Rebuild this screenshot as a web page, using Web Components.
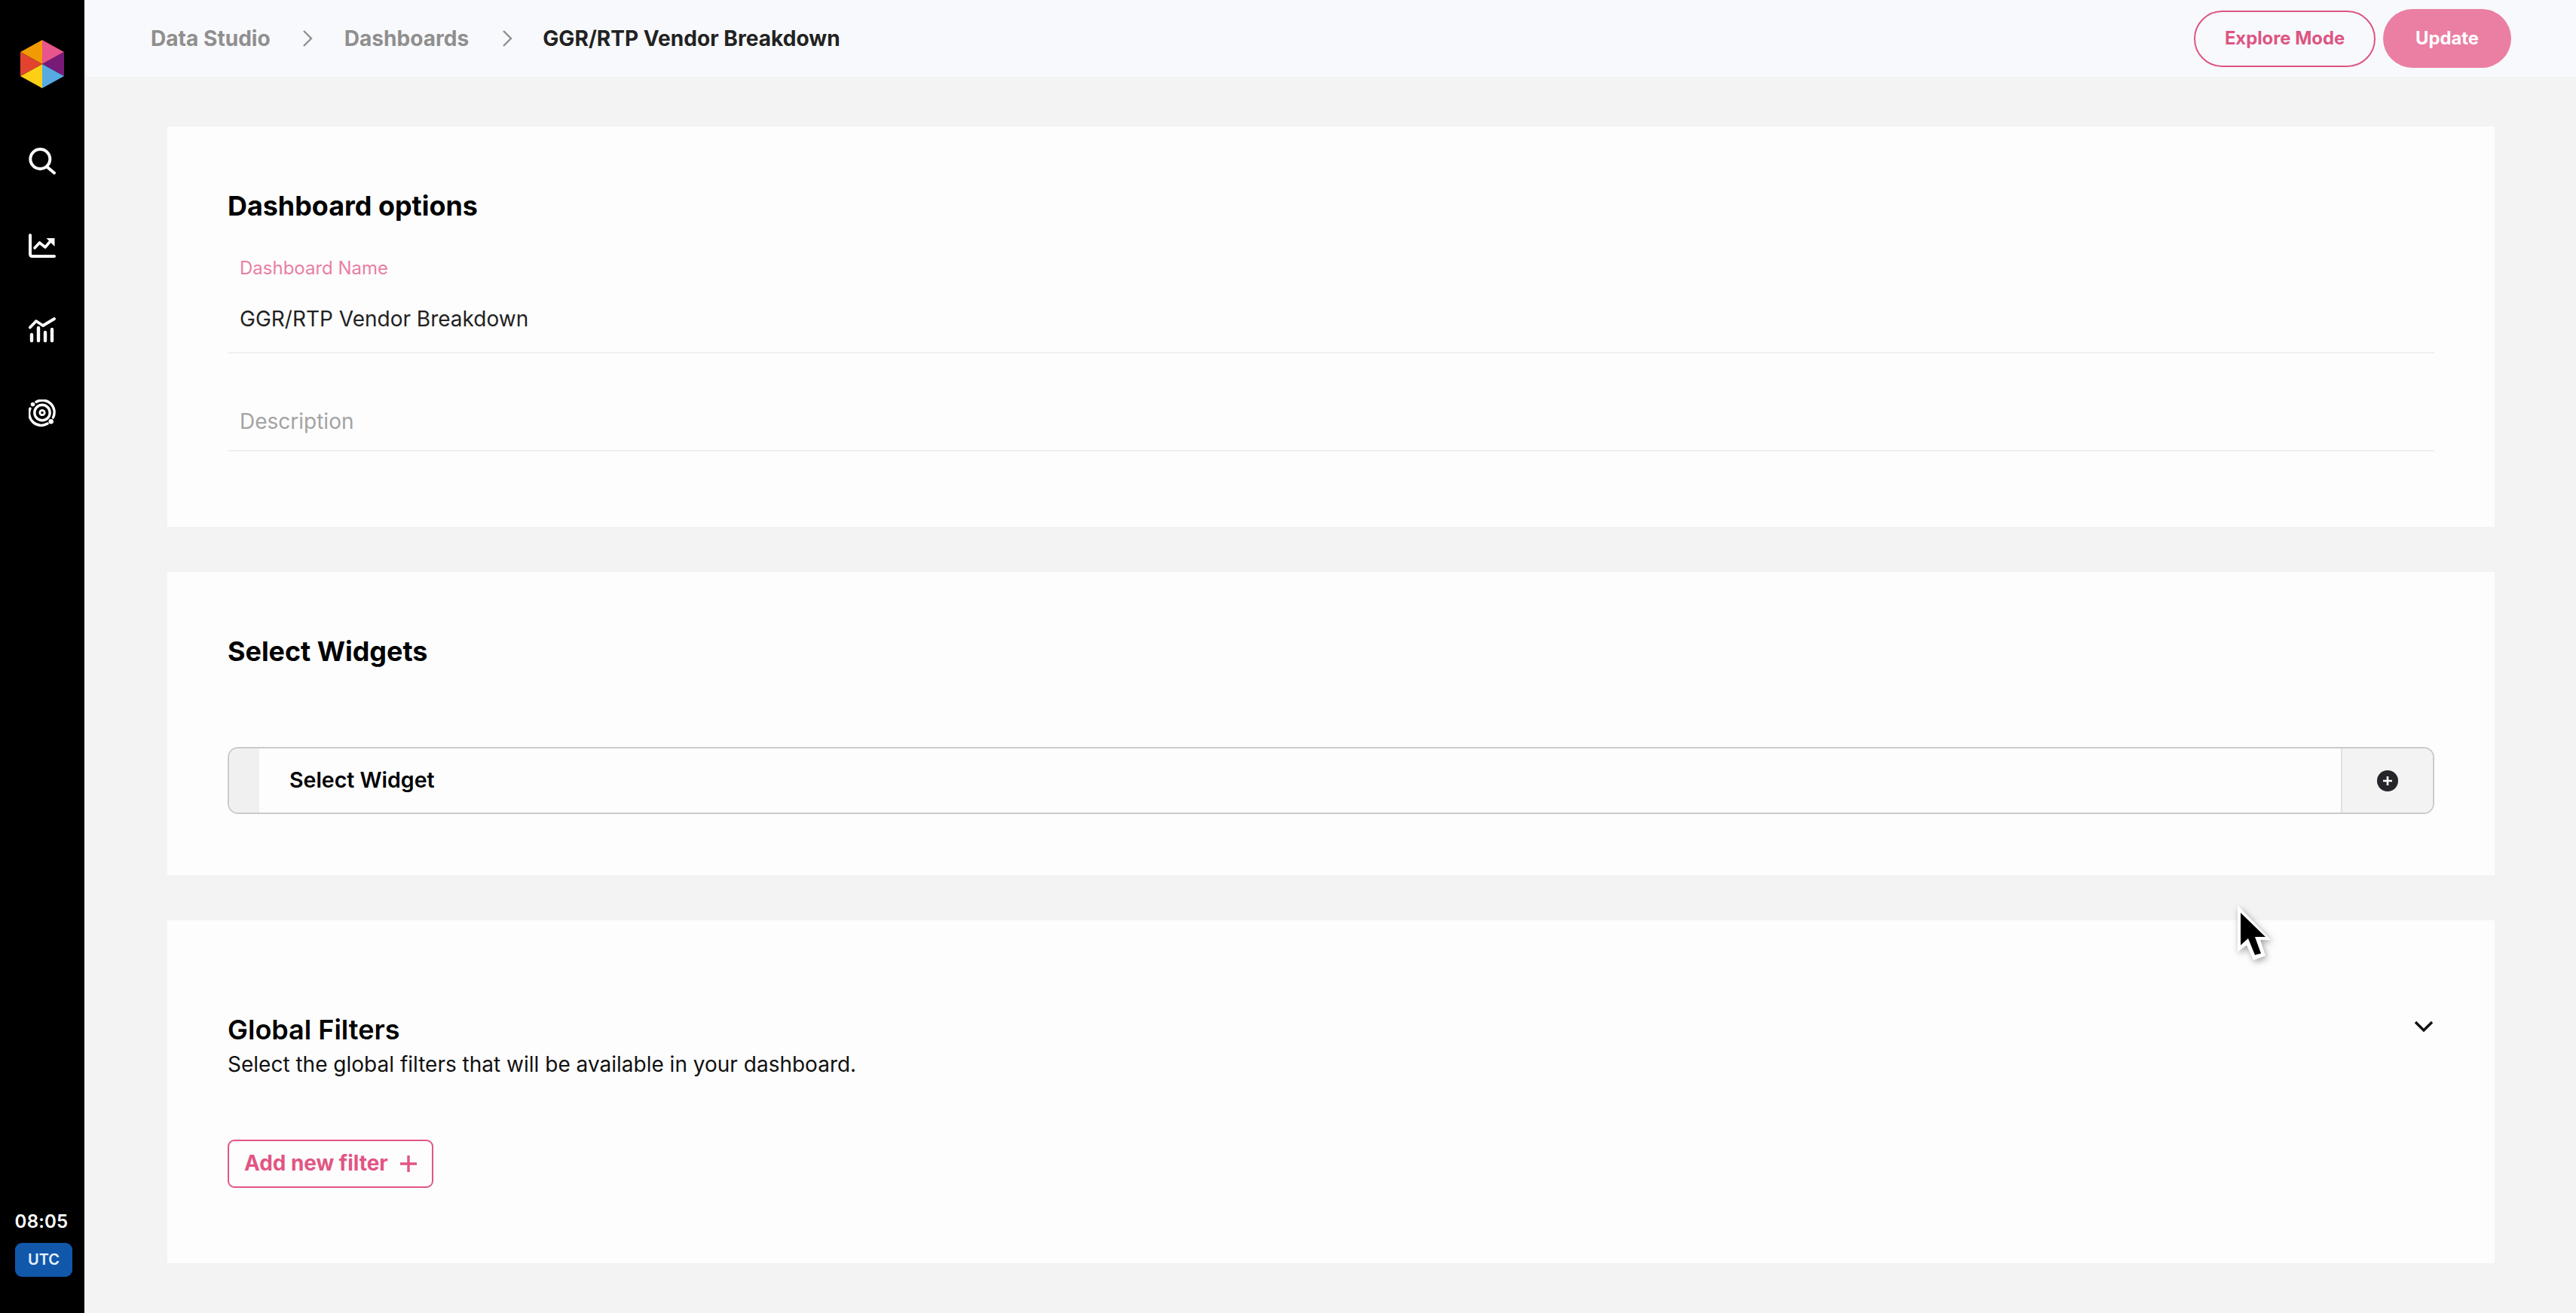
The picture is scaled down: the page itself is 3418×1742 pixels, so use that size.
<!DOCTYPE html>
<html><head><meta charset="utf-8"><style>
html,body{margin:0;height:100%}
body{font-family:Inter,"Liberation Sans",sans-serif;background:#f3f3f3;overflow:hidden}
</style></head><body>
<app-shell>
  <side-rail slot="rail"></side-rail>
  <top-bar slot="top"></top-bar>
  <option-card class="a" heading="Dashboard options">
    <text-field label="Dashboard Name" value="GGR/RTP Vendor Breakdown"></text-field>
    <text-field placeholder="Description"></text-field>
  </option-card>
  <option-card class="b" heading="Select Widgets"><widget-select></widget-select></option-card>
  <filter-card></filter-card>
</app-shell>
<mouse-cursor></mouse-cursor>
<script>
function def(name,html,init){customElements.define(name,class extends HTMLElement{constructor(){super();this.attachShadow({mode:'open'}).innerHTML=html;}connectedCallback(){if(init)init(this,this.shadowRoot)}})}
def('app-shell',`<style>
:host{display:grid;grid-template-columns:112px 1fr;grid-template-rows:102px 1fr;height:1742px;background:#f3f3f3}
::slotted(side-rail){grid-row:1/3}
main{display:flex;flex-direction:column;gap:60px;padding:66px 108px 0 110px}
</style><slot name="rail"></slot><slot name="top"></slot><main><slot></slot></main>`);
def('side-rail',`<style>
:host{display:flex;flex-direction:column;align-items:center;background:#000;height:1742px;position:relative}
.logo{margin-top:53px;display:block}
.nav{display:flex;flex-direction:column;align-items:center;gap:75.4px;margin-top:79px}
.nav svg{display:block;width:36px;height:36px;fill:none;stroke:#fff;stroke-width:4;stroke-linecap:round;stroke-linejoin:round}
.clock{margin-top:auto;margin-bottom:48px;display:flex;flex-direction:column;align-items:center;gap:14px}
.t{color:#fff;font:600 24px/28px Inter,sans-serif;letter-spacing:.2px;margin-left:-2px}
.z{background:#1158ab;color:#e8f3fb;font:600 20px/45px Inter,sans-serif;width:76px;height:45px;text-align:center;border-radius:9px;margin-left:4px}
</style>
<svg class="logo" width="58" height="64" viewBox="0 0 58 64">
<polygon points="29,32 29,0 0,16" fill="#f09a04"/><polygon points="29,32 29,0 58,16" fill="#e8548c"/>
<polygon points="29,32 58,16 58,48" fill="#791a78"/><polygon points="29,32 58,48 29,64" fill="#57aae2"/>
<polygon points="29,32 29,64 0,48" fill="#fdd015"/><polygon points="29,32 0,48 0,16" fill="#e2432f"/></svg>
<div class="nav">
<svg viewBox="0 0 36 36"><circle cx="15.3" cy="15" r="13"/><path d="M24.5 25.5L34 33.5"/></svg>
<svg viewBox="0 0 36 36"><path d="M2 5V30q0 3 3 3H34"/><path stroke-width="3.6" d="M8 22L14.5 15 22 21 28 14"/><path fill="#fff" stroke="none" d="M23.5 9H34.5V20z"/></svg>
<svg viewBox="0 0 36 36"><path stroke-width="3.8" d="M1.8 15.5L10 7 19 13 34 4"/><path stroke-width="4.4" d="M4 25v8M13 16v17M22 22v11M31 18v15"/></svg>
<svg viewBox="0 0 36 36"><path stroke-width="3.4" d="M10 3.2A16 16 0 0 1 32.5 24"/><path stroke-width="3.4" d="M25 32A16 16 0 0 1 2 12"/><circle cx="5.5" cy="6.5" r="2.8" fill="#fff" stroke="none"/><circle cx="29.7" cy="29.3" r="3.2" fill="#fff" stroke="none"/><circle cx="18" cy="17.5" r="10.2" stroke-width="3.4"/><circle cx="18" cy="17.5" r="3.2" stroke-width="2.8"/></svg>
</div>
<div class="clock"><div class="t">08:05</div><div class="z">UTC</div></div>`);
def('top-bar',`<style>
:host{display:flex;align-items:center;height:102px;background:#f8f9fc;padding:0 86px 0 88px;font:700 28.1px/1 Inter,sans-serif;box-sizing:border-box}
.c{color:#8f8f8f}.cur{color:#222}
svg{width:14px;height:22px;fill:none;stroke:#8f8f8f;stroke-width:2.4;margin:0 42px}
svg.s2{margin:0 40px 0 44px}
.sp{flex:1}
.btn{display:flex;align-items:center;justify-content:center;border-radius:40px;font:700 23.8px/1 Inter,sans-serif;box-sizing:border-box}
.o{width:241px;height:75px;border:2px solid #dd5582;color:#dd5582}
.f{width:170px;height:78px;margin-left:10px;background:#ea7fa3;color:#fff}
</style>
<span class="c">Data Studio</span><svg viewBox="0 0 14 22"><path d="M2 1l10 10L2 21"/></svg>
<span class="c">Dashboards</span><svg class="s2" viewBox="0 0 14 22"><path d="M2 1l10 10L2 21"/></svg>
<span class="cur">GGR/RTP Vendor Breakdown</span><span class="sp"></span>
<div class="btn o">Explore Mode</div><div class="btn f">Update</div>`);
def('option-card',`<style>
:host{display:block;background:#fdfdfd;padding:0 80px;box-sizing:border-box}
:host(.a){height:531px}:host(.b){height:402px}
h2{margin:0;font:700 35.9px/44px Inter,sans-serif;color:#000;padding-top:83px}
:host(.b) .body{padding-top:105px}
:host(.a) .body{padding-top:46px}
</style><h2></h2><div class="body"><slot></slot></div>`,(el,s)=>{s.querySelector('h2').textContent=el.getAttribute('heading')});
def('text-field',`<style>
:host{display:block;border-bottom:2px solid #efefef;padding:0 16px;box-sizing:border-box;height:128px}
:host(:last-child){height:130px}
label{display:block;color:#ea7fa3;font:400 24px/30px Inter,sans-serif;height:30px}
.v{color:#222;font:400 28px/36px Inter,sans-serif;margin-top:34px}
.p{color:#a3a3a3;font:400 28px/36px Inter,sans-serif;padding-top:72px}
</style>`,(el,s)=>{
 const l=el.getAttribute('label'),v=el.getAttribute('value'),p=el.getAttribute('placeholder');
 if(l){s.innerHTML+=`<label>${l}</label><div class="v">${v}</div>`}else{s.innerHTML+=`<div class="p">${p}</div>`}
});
def('widget-select',`<style>
:host{display:grid;grid-template-columns:40px 1fr 122px;height:89px;border:2px solid #cbcbcb;border-radius:14px;box-sizing:border-box;overflow:hidden}
.l{background:#f0f0f0}
.m{background:#fdfdfd;display:flex;align-items:center;padding-left:40px;font:600 28.5px/1 Inter,sans-serif;color:#000}
.r{background:#f3f3f3;border-left:2px solid #e2e2e2;display:flex;align-items:center;justify-content:center}
svg{width:28px;height:28px;display:block}
</style><div class="l"></div><div class="m">Select Widget</div><div class="r"><svg viewBox="0 0 28 28"><circle cx="14" cy="14" r="14" fill="#25252a"/><path d="M14 8v12M8 14h12" stroke="#fff" stroke-width="2.6"/></svg></div>`);
def('filter-card',`<style>
:host{display:block;background:#fdfdfd;height:455px;padding:123px 80px 0;box-sizing:border-box}
.head{display:flex;justify-content:space-between;align-items:flex-start}
h2{margin:0;font:600 36px/44px Inter,sans-serif;color:#000}
p{margin:6px 0 0;font:400 28px/36px Inter,sans-serif;color:#111}
.chev{width:24px;height:15px;margin:10px 2px 0 0;display:block;fill:none;stroke:#111;stroke-width:3.4}
.add{margin-top:82px;display:inline-flex;align-items:center;height:64px;width:273px;box-sizing:border-box;border:2px solid #e25583;border-radius:9px;color:#e25583;font:700 27.9px/1 Inter,sans-serif;padding-left:20px;gap:16px}
.add svg{width:22px;height:22px;fill:none;stroke:#e25583;stroke-width:3.4}
</style><div class="head"><div><h2>Global Filters</h2><p>Select the global filters that will be available in your dashboard.</p></div>
<svg class="chev" viewBox="0 0 24 15"><path d="M1 2l11 11L23 2"/></svg></div>
<div class="add">Add new filter<svg viewBox="0 0 22 22"><path d="M11 0v22M0 11h22"/></svg></div>`);
def('mouse-cursor',`<style>
:host{position:absolute;left:2940px;top:1190px;display:block;width:90px;height:100px;filter:drop-shadow(2px 3px 4px rgba(0,0,0,.35))}
svg{display:block}
</style><svg width="90" height="100" viewBox="0 0 90 100"><path d="M29 11L73 57H59L66 78 50 84 41 64 29 73z" fill="#fff"/><path d="M33 21L66 53H52L60 75 52 77 43 55 33 64z" fill="#000"/></svg>`);
</script>
</body></html>
